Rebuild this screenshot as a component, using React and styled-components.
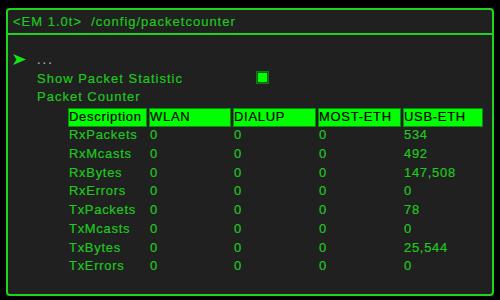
import React from "react";
import styled, { createGlobalStyle } from "styled-components";

const Global = createGlobalStyle`
  html, body { margin: 0; padding: 0; background: #000; }
  body { width: 500px; height: 300px; overflow: hidden; font-family: "Liberation Sans", Arial, sans-serif; }
`;

const Panel = styled.div`
  box-sizing: border-box;
  margin: 8px 0 0 6px;
  width: 488px;
  height: 288px;
  border: 2px solid #1fd41f;
  border-radius: 4px;
  background: #202020;
  display: flex;
  flex-direction: column;
`;

const Header = styled.div`
  box-sizing: border-box;
  height: 25px;
  border-bottom: 2px solid #1fd41f;
  padding-left: 5px;
  line-height: 24px;
  font-size: 13px;
  letter-spacing: 1px;
  color: #1ec81e;
  -webkit-text-stroke: 0.2px #1ec81e;
  white-space: pre;
`;

const Body = styled.div`
  display: flex;
  padding: 15px 0 0 5px;
`;

const PointerCol = styled.div`
  width: 24px;
  height: 18.75px;
  display: flex;
  align-items: center;
`;

const Content = styled.div`
  display: flex;
  flex-direction: column;
`;

const Item = styled.div`
  display: flex;
  align-items: center;
  height: 18.75px;
  font-size: 13px;
  letter-spacing: ${(p) => (p.$dim ? "2px" : "1px")};
  color: ${(p) => (p.$dim ? "#b0b0b0" : "#1ec81e")};
  -webkit-text-stroke: 0.2px ${(p) => (p.$dim ? "#b0b0b0" : "#1ec81e")};
`;

const Label = styled.span`
  width: ${(p) => (p.$w ? p.$w + "px" : "auto")};
`;

const Check = styled.span`
  box-sizing: border-box;
  width: 13px;
  height: 13px;
  border: 1px solid #0d7d0d;
  padding: 1px;
  display: flex;
  background: #155515;
  margin-top: -2px;
  &::after {
    content: "";
    flex: 1;
    background: #00ff00;
  }
`;

const Table = styled.div`
  display: grid;
  grid-template-columns: 81px 84px 85px 85px 82px;
  margin: 1.75px 0 0 31px;
  font-size: 13px;
`;

const HeadCell = styled.div`
  box-sizing: border-box;
  height: 19px;
  margin-right: 2px;
  border: 1px solid #0e8a0e;
  background: #00ff00;
  color: #000;
  line-height: 16px;
  letter-spacing: 0.7px;
  -webkit-text-stroke: 0.2px #000;
  white-space: nowrap;
  overflow: hidden;
`;

const Cell = styled.div`
  box-sizing: border-box;
  height: 18.75px;
  line-height: 15px;
  padding-left: 1px;
  letter-spacing: 0.7px;
  color: #1ec81e;
  -webkit-text-stroke: 0.2px #1ec81e;
  white-space: nowrap;
`;

const Arrow = () => (
  <svg width="13" height="11" viewBox="0 0 13 11">
    <polygon points="0,0 13,5.5 0,11 3.5,5.5" fill="#14e814" />
  </svg>
);

const cols = ["Description", "WLAN", "DIALUP", "MOST-ETH", "USB-ETH"];
const rows = [
  ["RxPackets", "0", "0", "0", "534"],
  ["RxMcasts", "0", "0", "0", "492"],
  ["RxBytes", "0", "0", "0", "147,508"],
  ["RxErrors", "0", "0", "0", "0"],
  ["TxPackets", "0", "0", "0", "78"],
  ["TxMcasts", "0", "0", "0", "0"],
  ["TxBytes", "0", "0", "0", "25,544"],
  ["TxErrors", "0", "0", "0", "0"],
];

export default function App() {
  return (
    <>
      <Global />
      <Panel>
        <Header>{"<EM 1.0t>  /config/packetcounter"}</Header>
        <Body>
          <PointerCol>
            <Arrow />
          </PointerCol>
          <Content>
            <Item $dim>...</Item>
            <Item>
              <Label $w={219}>Show Packet Statistic</Label>
              <Check />
            </Item>
            <Item>Packet Counter</Item>
            <Table>
              {cols.map((c) => (
                <HeadCell key={c}>{c}</HeadCell>
              ))}
              {rows.map((r) =>
                r.map((v, i) => <Cell key={r[0] + i}>{v}</Cell>)
              )}
            </Table>
          </Content>
        </Body>
      </Panel>
    </>
  );
}
